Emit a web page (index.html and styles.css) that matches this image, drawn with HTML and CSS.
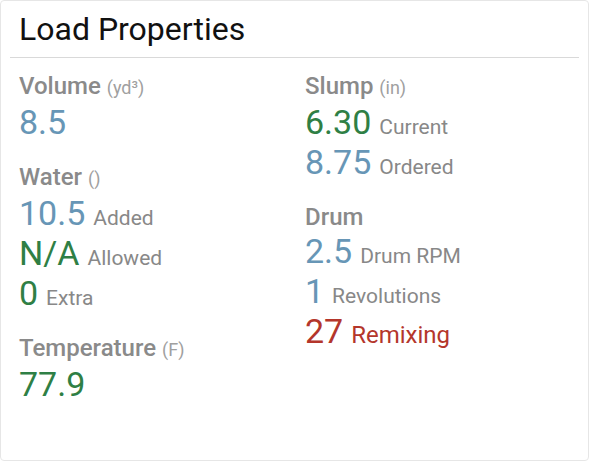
FILE: index.html
```html
<!DOCTYPE html>
<html>
<head>
<meta charset="utf-8">
<link rel="stylesheet" href="styles.css">
</head>
<body>
<div class="card">
  <div class="card-header"><h1 class="title">Load Properties</h1></div>
  <div class="card-body">
    <div class="col">
      <div class="section">
        <div class="label">Volume <span class="unit">(yd³)</span></div>
        <div class="row"><span class="val blue">8.5</span></div>
      </div>
      <div class="section">
        <div class="label">Water <span class="unit">()</span></div>
        <div class="row"><span class="val blue">10.5</span><span class="desc">Added</span></div>
        <div class="row"><span class="val green">N/A</span><span class="desc">Allowed</span></div>
        <div class="row"><span class="val green">0</span><span class="desc">Extra</span></div>
      </div>
      <div class="section">
        <div class="label">Temperature <span class="unit">(F)</span></div>
        <div class="row"><span class="val green">77.9</span></div>
      </div>
    </div>
    <div class="col">
      <div class="section">
        <div class="label">Slump <span class="unit">(in)</span></div>
        <div class="row"><span class="val green">6.30</span><span class="desc">Current</span></div>
        <div class="row"><span class="val blue">8.75</span><span class="desc">Ordered</span></div>
      </div>
      <div class="section">
        <div class="label">Drum</div>
        <div class="row"><span class="val blue">2.5</span><span class="desc">Drum RPM</span></div>
        <div class="row"><span class="val blue">1</span><span class="desc">Revolutions</span></div>
        <div class="row"><span class="val red">27</span><span class="desc big red">Remixing</span></div>
      </div>
    </div>
  </div>
</div>
</body>
</html>
```

FILE: styles.css
```css
html, body {
  margin: 0;
  padding: 0;
  background: #fff;
}
body {
  font-family: Roboto, "Liberation Sans", sans-serif;
}
.card {
  box-sizing: border-box;
  width: 589px;
  height: 461px;
  border: 1px solid #e6e6e6;
  border-radius: 4px;
  padding: 0 9px;
  background: #fff;
}
.card-header {
  height: 56px;
  border-bottom: 1px solid #d9d9d9;
  padding: 0 9px;
}
.title {
  margin: 0;
  padding-top: 9px;
  font-size: 32px;
  line-height: 38px;
  font-weight: 400;
  color: #111;
}
.card-body {
  display: grid;
  grid-template-columns: 286px 1fr;
  padding: 14px 9px 0;
}
.section {
  margin-bottom: 21px;
}
.label {
  font-size: 24px;
  line-height: 28px;
  font-weight: 500;
  color: #8a8a8a;
}
.unit {
  font-size: 18px;
  font-weight: 400;
  color: #a0a0a0;
}
.row {
  display: flex;
  align-items: baseline;
  height: 40px;
  line-height: 40px;
}
.val {
  font-size: 34px;
  margin-right: 8px;
}
.desc {
  font-size: 21px;
  color: #888;
}
.desc.big {
  font-size: 24px;
}
.blue { color: #6796b6; }
.green { color: #2f7f45; }
.red { color: #b4362b; }
.desc.red { color: #b4362b; }
```
